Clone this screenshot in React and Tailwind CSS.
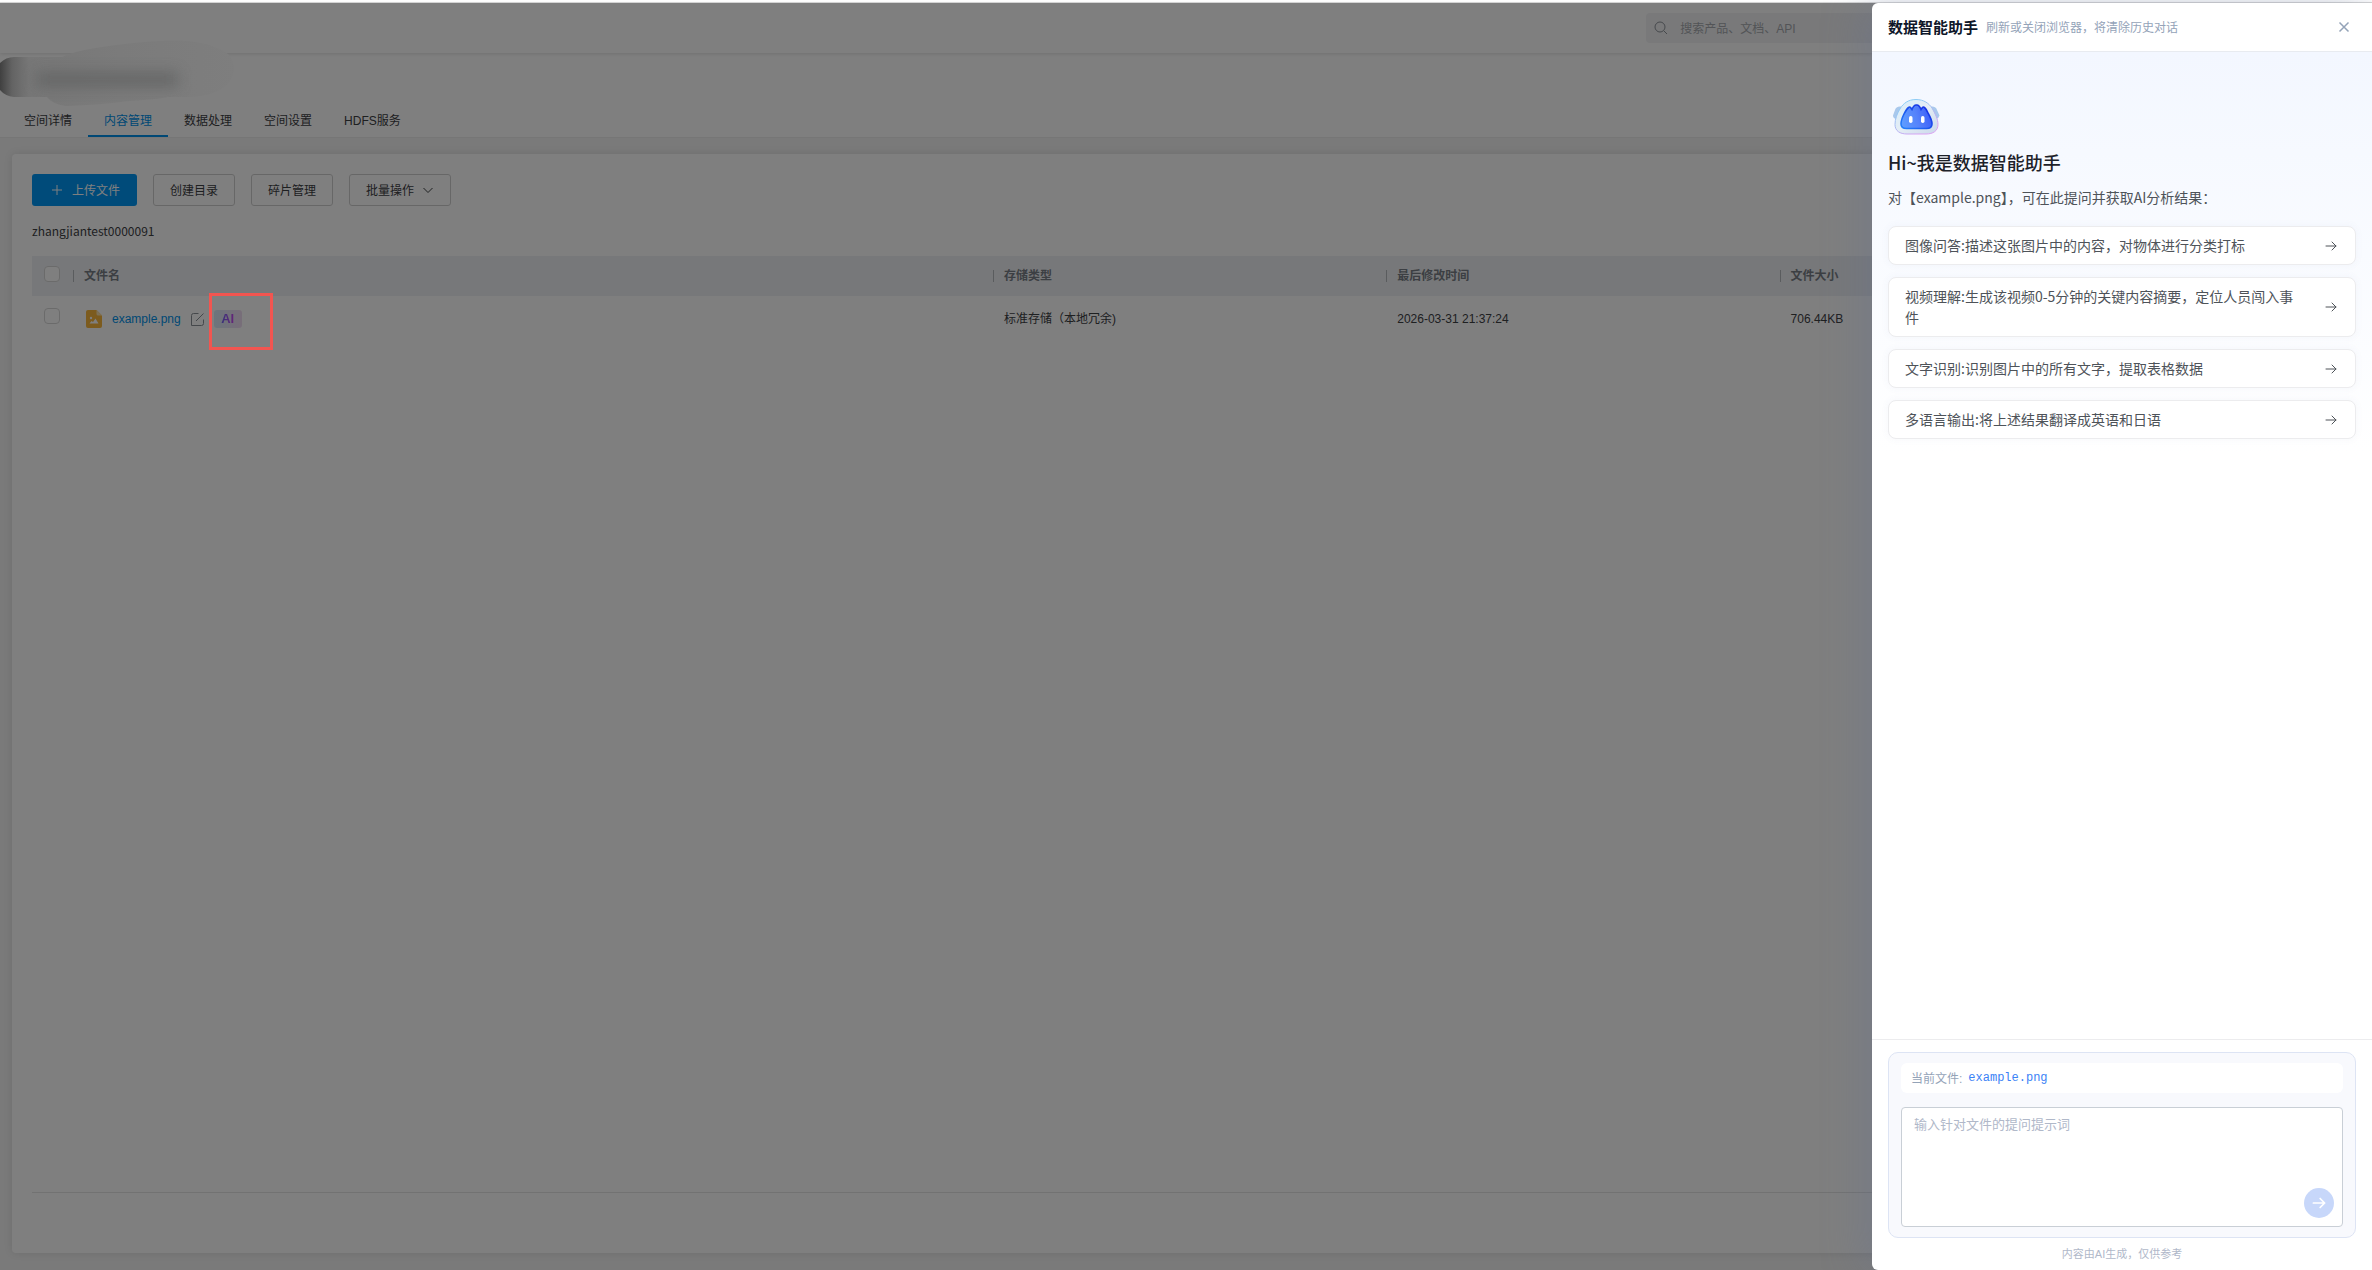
import React, { useState } from 'react';

const TABS = ['空间详情', '内容管理', '数据处理', '空间设置', 'HDFS服务'];

const SUGGESTIONS = [
    '图像问答:描述这张图片中的内容，对物体进行分类打标',
    '视频理解:生成该视频0-5分钟的关键内容摘要，定位人员闯入事件',
    '文字识别:识别图片中的所有文字，提取表格数据',
    '多语言输出:将上述结果翻译成英语和日语',
];

const FILES = [
    { name: 'example.png', storage: '标准存储（本地冗余)', modified: '2026-03-31 21:37:24', size: '706.44KB' },
];

export default function App() {
    const [tab, setTab] = useState('内容管理');

    return (
        <div className="flex min-h-screen flex-col bg-white font-['Liberation_Sans','Noto_Sans_CJK_SC',sans-serif] text-xs text-[#3c4043]">
            <div className="h-[3px] border-b border-[#d9d9d9]" />

            <div className="relative flex flex-1 flex-col">
                <TopBar />
                <SpaceHeader tab={tab} onChange={setTab} />
                <main className="flex flex-1 flex-col bg-[#f4f4f4] px-3 pt-4 pb-[17px]">
                    <FileManager />
                </main>

                {/* MASK */}
                <div className="absolute inset-0 bg-black/50" />
                <Smudge />
                <div className="absolute top-[290px] left-[209px] h-[57px] w-16 border-3 border-[#f25550]" />

                <AssistantDrawer file={FILES[0].name} />
            </div>
        </div>
    );
}

function TopBar() {
    return (
        <header className="relative z-0 flex h-[50px] justify-end px-6 py-[10px] shadow-[0_1px_4px_rgba(0,0,0,0.12)]">
            <label className="flex h-[30px] w-[30.2%] items-center gap-3 rounded bg-[#f2f3f5] px-2 text-[#8d9299]">
                <svg className="size-[14px]" viewBox="0 0 14 14" fill="none" stroke="currentColor">
                    <circle cx="6" cy="6" r="5" />
                    <path d="M9.8 9.8 13 13" />
                </svg>
                <input aria-label="搜索" placeholder="搜索产品、文档、API" className="flex-1 pt-[2px] outline-none placeholder:text-[#a6a9ae]" />
            </label>
        </header>
    );
}

function SpaceHeader({ tab, onChange }) {
    return (
        <nav className="flex border-b border-[#ececec] px-2 pt-[51px]">
            {TABS.map(t => (
                <button
                    key={t}
                    onClick={() => onChange(t)}
                    className={t === tab
                        ? 'h-[33px] border-b-2 border-[#0091ea] px-4 pt-[2px] text-[#0091ea]'
                        : 'h-[33px] border-b-2 border-transparent px-4 pt-[2px]'}
                >
                    {t}
                </button>
            ))}
        </nav>
    );
}

function FileManager() {
    return (
        <section className="flex flex-1 flex-col rounded-sm bg-white p-5 shadow-[0_0_8px_rgba(0,0,0,0.1)]">
            <div className="flex gap-4">
                <button className="flex h-8 items-center gap-[10px] rounded-[3px] bg-[#0096f5] pr-[17px] pl-5 text-white">
                    <svg className="size-[10px]" viewBox="0 0 10 10" fill="none" stroke="currentColor">
                        <path d="M5 0v10M0 5h10" />
                    </svg>
                    <span className="pt-[2px]">上传文件</span>
                </button>
                <button className="h-8 rounded-[3px] border border-[#cfcfcf] px-4 pt-[2px]">创建目录</button>
                <button className="h-8 rounded-[3px] border border-[#cfcfcf] px-4 pt-[2px]">碎片管理</button>
                <button aria-haspopup="menu" className="flex h-8 items-center gap-2 rounded-[3px] border border-[#cfcfcf] px-4 pt-[2px]">
                    批量操作
                    <svg className="h-[10px] w-3" viewBox="0 0 12 10" fill="none" stroke="currentColor">
                        <path d="M1.5 2 6 6.5 10.5 2" />
                    </svg>
                </button>
            </div>

            <div className="mt-4 font-['Noto_Sans_CJK_SC',sans-serif] leading-[18px]">zhangjiantest0000091</div>

            <table className="mt-4 w-full table-fixed text-left">
                <colgroup>
                    <col className="w-[41px]" />
                    <col className="w-[39.86%]" />
                    <col className="w-[17.04%]" />
                    <col className="w-[17.04%]" />
                    <col className="w-[17.04%]" />
                    <col />
                </colgroup>
                <thead>
                    <tr className="h-10 bg-[#eff1f4] text-[#787e86]">
                        <th className="pb-1 pl-3"><Tick label="全选" /></th>
                        <HeadCell>文件名</HeadCell>
                        <HeadCell>存储类型</HeadCell>
                        <HeadCell>最后修改时间</HeadCell>
                        <HeadCell>文件大小</HeadCell>
                        <HeadCell>操作</HeadCell>
                    </tr>
                </thead>
                <tbody>
                    {FILES.map(f => (
                        <tr key={f.name} className="h-[46px]">
                            <td className="pb-[6px] pl-3"><Tick label={f.name} /></td>
                            <td className="pl-[13px]">
                                <div className="flex items-center gap-[10px]">
                                    <FileIcon />
                                    <a href="#file" className="text-[#0091ea]">{f.name}</a>
                                    <svg className="size-[13px] text-[#8a9097]" viewBox="0 0 13 13" fill="none" stroke="currentColor">
                                        <path d="M7.5 0.5H2.5a2 2 0 0 0-2 2V12.5H10.5a2 2 0 0 0 2-2V6.5M5 8 12.5 0.5" />
                                    </svg>
                                    <button className="flex h-[18px] w-7 items-center justify-center rounded-[3px] bg-linear-to-r from-[#d9ebf8] to-[#f0dcf3]">
                                        <span className="bg-linear-to-r from-[#6a5ff5] to-[#cc45f2] bg-clip-text text-[13px] leading-[18px] font-bold text-transparent">AI</span>
                                    </button>
                                </div>
                            </td>
                            <td className="pl-[11px]">{f.storage}</td>
                            <td className="pl-[11px]">{f.modified}</td>
                            <td className="pl-[11px]">{f.size}</td>
                            <td className="pl-[11px]" />
                        </tr>
                    ))}
                </tbody>
            </table>

            <div className="mt-auto h-[41px] border-t border-[#e4e4e4]" />
        </section>
    );
}

function HeadCell({ children }) {
    return (
        <th className="p-0">
            <div className="flex items-center gap-[10px]">
                <span className="h-3 w-px bg-[#b4b8bd]" />
                {children}
            </div>
        </th>
    );
}

function Tick({ label }) {
    return <input type="checkbox" aria-label={label} className="block size-4 appearance-none rounded border border-[#d6d6d6] bg-white" />;
}

function FileIcon() {
    return (
        <svg className="h-[18px] w-4" viewBox="0 0 16 18">
            <path d="M2 0h8.5L16 5.5V16a2 2 0 0 1-2 2H2a2 2 0 0 1-2-2V2a2 2 0 0 1 2-2z" fill="#f8b63c" />
            <path d="M10.5 0 16 5.5h-4a1.5 1.5 0 0 1-1.5-1.5z" fill="#fbe2ae" />
            <circle cx="5" cy="8" r="1.2" fill="#fff" />
            <path d="M3.5 13.5 5.5 11 7 12 9.5 8.5 12.5 13.5z" fill="#fff" />
        </svg>
    );
}

// Blurred-out space name
function Smudge() {
    return (
        <svg className="absolute top-[33px] left-0 h-[76px] w-[250px]" viewBox="0 36 250 76">
            <defs>
                <linearGradient id="smudgeEdge" x1="0" x2="1">
                    <stop offset="0" stopColor="#404040" />
                    <stop offset="0.05" stopColor="#636363" />
                    <stop offset="0.12" stopColor="#777777" />
                    <stop offset="0.5" stopColor="#7b7b7b" />
                    <stop offset="1" stopColor="#7e7e7e" />
                </linearGradient>
                <filter id="smudgeBlur" x="-20%" y="-150%" width="140%" height="400%">
                    <feGaussianBlur stdDeviation="7" />
                </filter>
                <clipPath id="smudgeClip">
                    <path d="M0 63Q6 57 14 57H62Q68 54 76 52Q110 44 160 41Q205 38 228 54Q240 68 228 84Q215 96 190 97H168Q160 99 130 101Q100 105 66 106Q52 104 47 97H14Q5 96 0 90z" />
                </clipPath>
            </defs>
            <g clipPath="url(#smudgeClip)">
                <rect y="36" width="240" height="76" fill="url(#smudgeEdge)" />
                <rect x="36" y="72" width="142" height="15" fill="#626464" opacity="0.8" filter="url(#smudgeBlur)" />
            </g>
        </svg>
    );
}

function Arrow({ className }) {
    return (
        <svg className={className} viewBox="0 0 16 16" fill="none" stroke="currentColor" strokeLinecap="round" strokeLinejoin="round">
            <path d="M3 8h10M9 4l4 4-4 4" />
        </svg>
    );
}

function Robot() {
    return (
        <svg className="h-10 w-[56px]" viewBox="0 0 56 40">
            <defs>
                <linearGradient id="shell" x1="0" y1="0" x2="1" y2="1">
                    <stop offset="0" stopColor="#d6edfb" />
                    <stop offset="0.5" stopColor="#e4edf5" />
                    <stop offset="1" stopColor="#c9d8ea" />
                </linearGradient>
                <linearGradient id="shellEdge" x1="0" y1="0" x2="0.6" y2="1">
                    <stop offset="0" stopColor="#7fd6f7" />
                    <stop offset="0.6" stopColor="#a9b8f0" />
                    <stop offset="1" stopColor="#dba0f2" />
                </linearGradient>
                <linearGradient id="face" x1="0" y1="0.6" x2="1" y2="0.4">
                    <stop offset="0" stopColor="#5e9cff" />
                    <stop offset="0.5" stopColor="#5583fb" />
                    <stop offset="1" stopColor="#3a5cf8" />
                </linearGradient>
                <linearGradient id="faceEdge" x1="0" y1="1" x2="1" y2="0">
                    <stop offset="0" stopColor="#2583fb" />
                    <stop offset="1" stopColor="#1222e0" />
                </linearGradient>
            </defs>
            <path d="M13 9.5Q8 9 7 13L5 18.5Q5 21 8 22L13 14zM43 9.5Q48 9 49 13L51.5 18.5Q51 21 48 22L43 14z" fill="#a9c8ec" />
            <path d="M28 2.5C20 2.5 15.5 6.5 12.5 11C9 16.5 7 22 7 27.5C7 34 12 37 19 37H38C45 37 50 34 50 27.5C50 22 47 16.5 44 11C41 6.5 36 2.5 28 2.5z" fill="url(#shell)" stroke="url(#shellEdge)" />
            <path d="M20.5 10.5Q22 9 24 12.5Q26 7.5 28.5 8Q31 7.5 33 12.5Q35 9 36.5 10.5Q38.5 12 40.5 17Q44 23 44 27Q44 31.5 38.5 31.5H18.5Q13 31.5 13 27Q13 23 16 17Q18.5 12 20.5 10.5z" fill="url(#face)" stroke="url(#faceEdge)" strokeWidth="1.6" />
            <rect x="21" y="19" width="3.5" height="7" rx="1.7" fill="#fff" />
            <rect x="33" y="19" width="3.5" height="7" rx="1.7" fill="#fff" />
        </svg>
    );
}

function AssistantDrawer({ file }) {
    const [prompt, setPrompt] = useState('');

    return (
        <aside className="absolute inset-y-0 right-0 flex w-[500px] flex-col rounded-l-md bg-white shadow-[-8px_0_40px_rgba(100,116,150,0.35)]">
            {/* HEADER */}
            <div className="flex h-[49px] shrink-0 items-center border-b border-[#e8ebf0] px-4">
                <h2 className="pt-px text-[15px] font-bold text-[#0f172a]">数据智能助手</h2>
                <span className="ml-2 pt-[2px] text-[#94a3b8]">刷新或关闭浏览器，将清除历史对话</span>
                <button aria-label="关闭" className="ml-auto p-1 text-[#94a3b8]">
                    <svg className="size-4" viewBox="0 0 16 16" fill="none" stroke="currentColor" strokeWidth="1.5">
                        <path d="m3.5 3.5 9 9M12.5 3.5l-9 9" />
                    </svg>
                </button>
            </div>

            {/* CONVERSATION */}
            <div className="flex-1 bg-linear-to-b from-[#f3f7ff] to-white to-[400px] px-4 pt-[45px] font-['Noto_Sans_CJK_SC',sans-serif]">
                <Robot />
                <h1 className="mt-[11px] text-lg leading-7 font-medium text-[#1d2129]">Hi~我是数据智能助手</h1>
                <p className="mt-[10px] text-sm leading-[22px] text-[#4e5359]">对【{file}】，可在此提问并获取AI分析结果：</p>
                <div className="mt-[18px] flex flex-col gap-3">
                    {SUGGESTIONS.map(s => (
                        <button
                            key={s}
                            onClick={() => setPrompt(s)}
                            className="flex items-center justify-between gap-4 rounded-lg border border-[#ececee] bg-white px-4 py-2 text-left text-sm leading-[21px] text-[#4e5359] shadow-[0_0_8px_rgba(80,100,160,0.05)]"
                        >
                            {s}
                            <Arrow className="size-4 shrink-0" />
                        </button>
                    ))}
                </div>
            </div>

            {/* INPUT */}
            <div className="border-t border-[#ececee] px-4 pt-3 pb-[7px]">
                <div className="rounded-[10px] border border-[#dde4f4] bg-[#f8f9fd] px-3 py-[10px]">
                    <div className="flex h-[30px] items-center gap-[6px] rounded-md bg-white px-[10px] text-[#94a3b8]">
                        <span className="pt-[2px]">当前文件:</span>
                        <span className="font-['Courier_New','Liberation_Mono',monospace] text-[#3b82f6]">{file}</span>
                    </div>
                    <div className="relative mt-[14px]">
                        <textarea
                            aria-label="提问"
                            value={prompt}
                            onChange={e => setPrompt(e.target.value)}
                            placeholder="输入针对文件的提问提示词"
                            className="block h-[120px] w-full resize-none rounded border border-[#c9cfd6] bg-white px-3 py-[6px] text-[13px] leading-[21px] outline-none placeholder:text-[#b0b8c9]"
                        />
                        <button aria-label="发送" className="absolute right-[9px] bottom-[9px] flex size-[30px] items-center justify-center rounded-full bg-[#c7d7fa] text-white">
                            <Arrow className="size-[18px] stroke-[1.5]" />
                        </button>
                    </div>
                </div>
                <p className="mt-[7px] text-center text-[11px] leading-[18px] text-[#b0b8c9]">内容由AI生成，仅供参考</p>
            </div>
        </aside>
    );
}
